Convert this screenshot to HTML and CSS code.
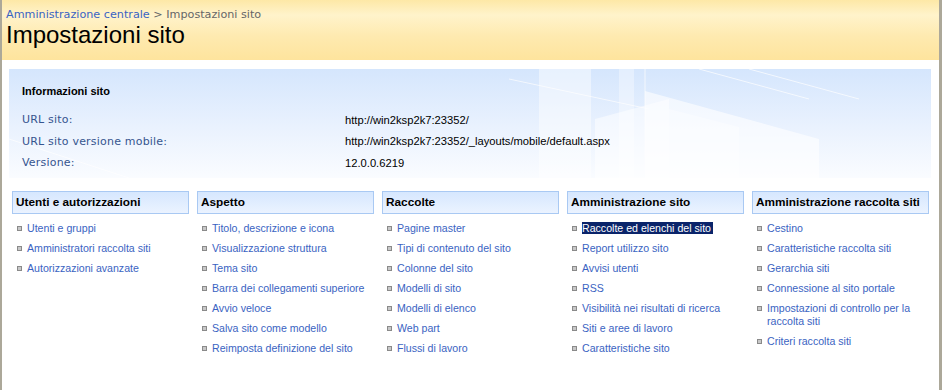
FILE: index.html
```html
<!DOCTYPE html>
<html lang="it">
<head>
  <meta charset="UTF-8">
  <title>Impostazioni sito</title>
  <link rel="stylesheet" href="styles.css">
</head>
<body>

<div class="pagina">

  <div class="titolo">
    <div class="percorso"><a href="#">Amministrazione centrale</a> &gt; Impostazioni sito</div>
    <h1>Impostazioni sito</h1>
  </div>

  <div class="info">
    <svg class="sfondo" width="922" height="109" viewBox="0 0 922 109">
      <g fill="#ffffff">
        <polygon points="530,0 582,0 582,109 530,109" opacity="0.45"/>
        <polygon points="610,0 625,0 625,109 610,109" opacity="0.35"/>
        <polygon points="586,50 660,30 660,109 586,109" opacity="0.5"/>
        <polygon points="636,22 810,70 810,109 636,109" opacity="0.6"/>
        <polygon points="660,40 730,58 730,109 660,109" opacity="0.35"/>
      </g>
      <g stroke="#ffffff" stroke-width="1" opacity="0.7">
        <line x1="500" y1="10" x2="640" y2="40"/>
        <line x1="690" y1="0" x2="800" y2="30"/>
        <line x1="740" y1="0" x2="850" y2="30"/>
        <line x1="636" y1="0" x2="636" y2="109"/>
        <line x1="0" y1="70" x2="120" y2="109"/>
      </g>
    </svg>
    <div class="info-titolo">Informazioni sito</div>
    <div class="riga"><span class="etichetta">URL sito:</span><span class="valore">http://win2ksp2k7:23352/</span></div>
    <div class="riga"><span class="etichetta">URL sito versione mobile:</span><span class="valore">http://win2ksp2k7:23352/_layouts/mobile/default.aspx</span></div>
    <div class="riga"><span class="etichetta">Versione:</span><span class="valore">12.0.0.6219</span></div>
  </div>

  <div class="sezioni">
    <div class="sezione">
      <div class="sezione-titolo">Utenti e autorizzazioni</div>
      <ul>
        <li><a href="#">Utenti e gruppi</a></li>
        <li><a href="#">Amministratori raccolta siti</a></li>
        <li><a href="#">Autorizzazioni avanzate</a></li>
      </ul>
    </div>
    <div class="sezione">
      <div class="sezione-titolo">Aspetto</div>
      <ul>
        <li><a href="#">Titolo, descrizione e icona</a></li>
        <li><a href="#">Visualizzazione struttura</a></li>
        <li><a href="#">Tema sito</a></li>
        <li><a href="#">Barra dei collegamenti superiore</a></li>
        <li><a href="#">Avvio veloce</a></li>
        <li><a href="#">Salva sito come modello</a></li>
        <li><a href="#">Reimposta definizione del sito</a></li>
      </ul>
    </div>
    <div class="sezione">
      <div class="sezione-titolo">Raccolte</div>
      <ul>
        <li><a href="#">Pagine master</a></li>
        <li><a href="#">Tipi di contenuto del sito</a></li>
        <li><a href="#">Colonne del sito</a></li>
        <li><a href="#">Modelli di sito</a></li>
        <li><a href="#">Modelli di elenco</a></li>
        <li><a href="#">Web part</a></li>
        <li><a href="#">Flussi di lavoro</a></li>
      </ul>
    </div>
    <div class="sezione">
      <div class="sezione-titolo">Amministrazione sito</div>
      <ul>
        <li><a href="#" class="selezionato">Raccolte ed elenchi del sito</a></li>
        <li><a href="#">Report utilizzo sito</a></li>
        <li><a href="#">Avvisi utenti</a></li>
        <li><a href="#">RSS</a></li>
        <li><a href="#">Visibilità nei risultati di ricerca</a></li>
        <li><a href="#">Siti e aree di lavoro</a></li>
        <li><a href="#">Caratteristiche sito</a></li>
      </ul>
    </div>
    <div class="sezione">
      <div class="sezione-titolo">Amministrazione raccolta siti</div>
      <ul>
        <li><a href="#">Cestino</a></li>
        <li><a href="#">Caratteristiche raccolta siti</a></li>
        <li><a href="#">Gerarchia siti</a></li>
        <li><a href="#">Connessione al sito portale</a></li>
        <li><a href="#">Impostazioni di controllo per la raccolta siti</a></li>
        <li><a href="#">Criteri raccolta siti</a></li>
      </ul>
    </div>
  </div>

</div>

</body>
</html>
```

FILE: styles.css
```css
body {
  margin: 0;
  background: white;
  font-family: "Liberation Sans", Arial, sans-serif;
}

a {
  color: #3a63c2;
  text-decoration: none;
}

.pagina {
  height: 390px;
  border-left: 2px solid #aca899;
  border-right: 3px solid #aca899;
  box-sizing: border-box;
  overflow: hidden;
}

.titolo {
  height: 60px;
  box-sizing: border-box;
  padding: 7px 0 0 4px;
  background: linear-gradient(#fde8a6, #fff3cb 25%, #feeab0 60%, #fee49d);
}

.percorso {
  font-family: "DejaVu Sans", Verdana, sans-serif;
  font-size: 11.2px;
  line-height: 15px;
  color: #666666;
}

.titolo h1 {
  margin: 0;
  font-weight: normal;
  font-size: 24px;
  line-height: 26px;
  color: black;
}

.info {
  position: relative;
  height: 109px;
  margin: 9px 8px 0 7px;
  padding: 15px 0 0 13px;
  box-sizing: border-box;
  background: linear-gradient(#d5e6fd, #eaf2fe 55%, #fafcff);
}

.sfondo {
  position: absolute;
  left: 0;
  top: 0;
  pointer-events: none;
}

.info-titolo {
  position: relative;
  font-weight: bold;
  font-size: 11px;
  line-height: 14px;
  margin-bottom: 11px;
}

.riga {
  position: relative;
  display: flex;
  height: 21.5px;
  align-items: center;
}

.etichetta {
  width: 323px;
  font-family: "DejaVu Sans", Verdana, sans-serif;
  font-size: 11px;
  letter-spacing: 0.2px;
  color: #36558f;
}

.valore {
  font-size: 11.2px;
  color: black;
}

.sezioni {
  display: grid;
  grid-template-columns: repeat(5, 177px);
  column-gap: 8px;
  margin: 13px 0 0 10px;
}

.sezione-titolo {
  height: 23px;
  box-sizing: border-box;
  border: 1px solid #a9c9f3;
  background: linear-gradient(#d6e7fe, #ebf3ff);
  padding-left: 3px;
  font-weight: bold;
  font-size: 11.8px;
  line-height: 21px;
  color: black;
}

.sezione ul {
  list-style: none;
  margin: 8px 0 0;
  padding: 0 0 0 15px;
}

.sezione li {
  position: relative;
  font-size: 10.6px;
  line-height: 13px;
  margin-bottom: 7px;
}

.sezione li::before {
  content: "";
  position: absolute;
  left: -10px;
  top: 4px;
  width: 3px;
  height: 3px;
  border: 1px solid #8a8a8a;
  background: #c8c8c8;
}

.selezionato {
  background: #0a246a;
  color: white;
  padding: 0 2px 0 0;
}
```
